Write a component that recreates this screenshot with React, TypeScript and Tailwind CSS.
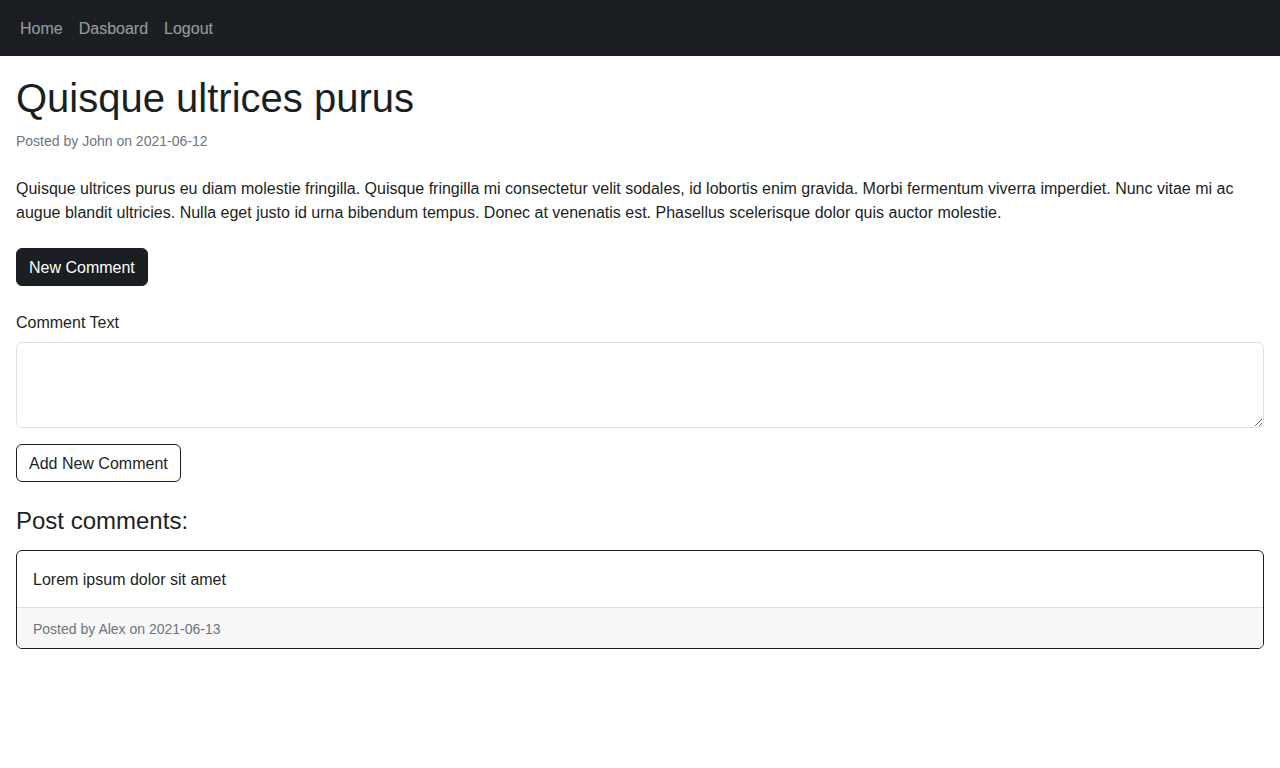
export default function App() {
  const links = ["Home", "Dasboard", "Logout"];

  return (
    <div className="min-h-screen bg-white text-[#1b1f23] font-['Segoe_UI','Liberation_Sans',Arial,sans-serif] text-base leading-6">
      <nav className="h-14 bg-[#1b1f23] flex items-center px-3 pt-0.5">
        {links.map((l) => (
          <a key={l} href="#" className="px-2 text-white/55 hover:text-white/75">
            {l}
          </a>
        ))}
      </nav>

      <main className="px-4 pt-4">
        <h1 className="text-[40px] leading-[1.2] font-medium pt-[2px] mb-[6px]">Quisque ultrices purus</h1>
        <p className="pt-px mb-[23px]">
          <small className="text-sm text-[#6c757d]">Posted by John on 2021-06-12</small>
        </p>

        <p className="pt-px mb-[23px]">
          Quisque ultrices purus eu diam molestie fringilla. Quisque fringilla mi consectetur velit sodales, id lobortis
          enim gravida. Morbi fermentum viverra imperdiet. Nunc vitae mi ac augue blandit ultricies. Nulla eget justo id
          urna bibendum tempus. Donec at venenatis est. Phasellus scelerisque dolor quis auctor molestie.
        </p>

        <button className="h-[38px] px-3 pt-px rounded-md bg-[#1b1f23] border border-[#1b1f23] text-white mb-6">
          New Comment
        </button>

        <label htmlFor="comment" className="block pt-px mb-[7px]">
          Comment Text
        </label>
        <textarea
          id="comment"
          rows={3}
          className="block w-full h-[86px] px-3 py-1.5 rounded-md border border-[#dee2e6] mb-4 outline-none"
        />

        <button className="h-[38px] px-3 pt-px rounded-md border border-[#1b1f23] text-[#1b1f23] bg-white">
          Add New Comment
        </button>

        <h4 className="text-2xl leading-[1.2] font-medium mt-6 pt-px mb-[14px]">Post comments:</h4>

        <div className="rounded-md border border-[#1b1f23] overflow-hidden">
          <div className="px-4 pt-[17px] pb-[15px]">Lorem ipsum dolor sit amet</div>
          <div className="border-t border-[#dfdfdf] bg-[#f7f7f7] px-4 pt-[9px] pb-[7px] text-sm leading-6 text-[#6c757d]">
            Posted by Alex on 2021-06-13
          </div>
        </div>
      </main>
    </div>
  );
}
